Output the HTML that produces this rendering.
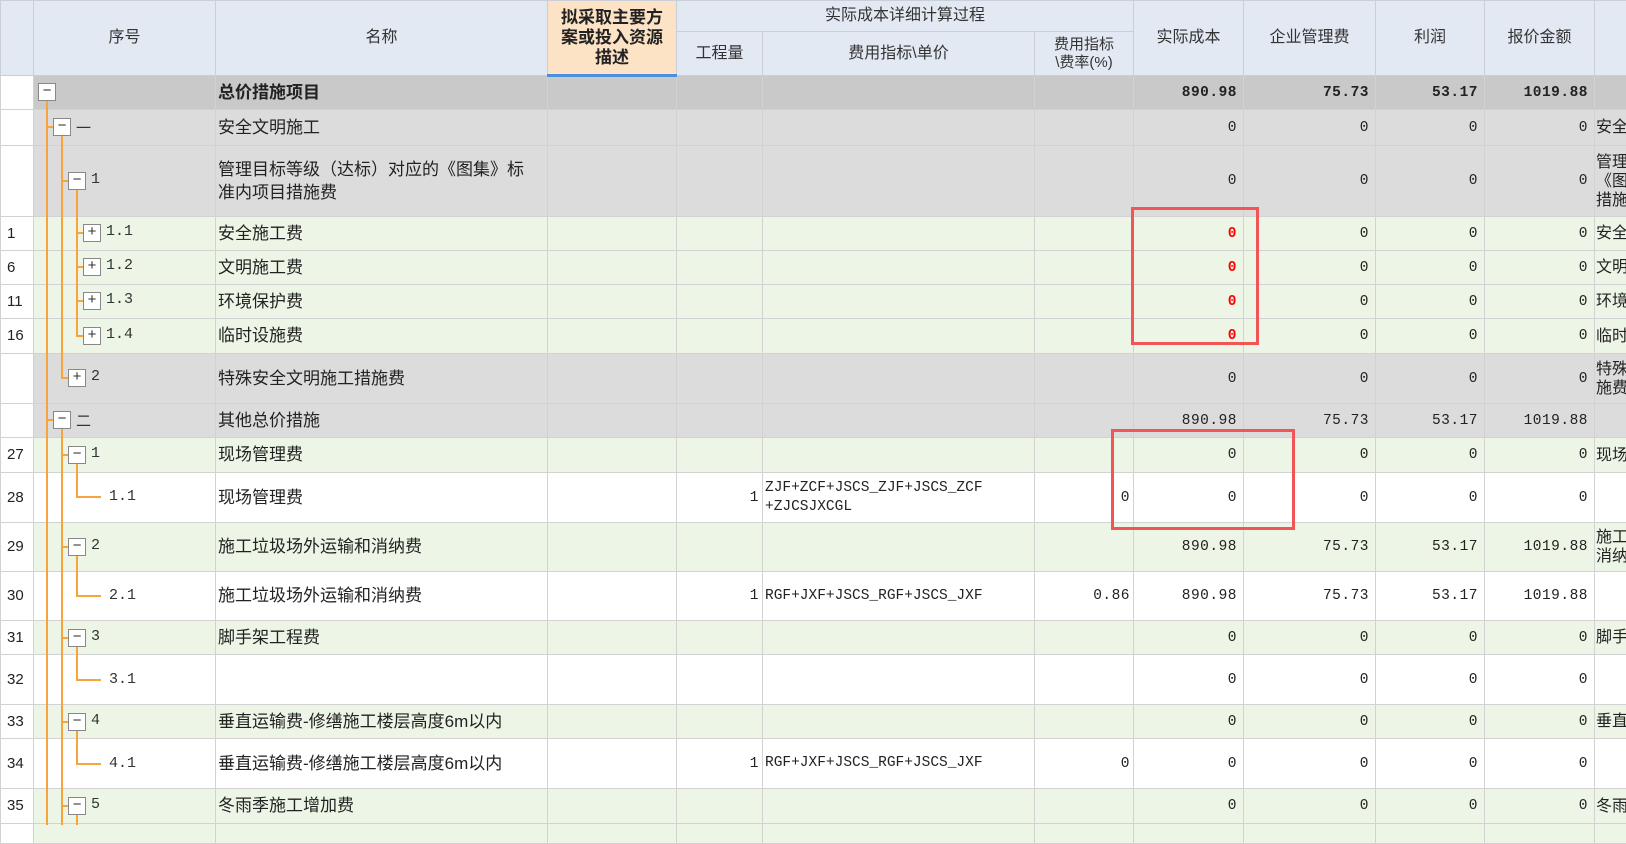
<!DOCTYPE html>
<html><head><meta charset="utf-8"><style>
*{margin:0;padding:0;box-sizing:border-box}
body{width:1626px;height:825px;overflow:hidden;background:#fff;font-family:"Liberation Sans","Noto Sans CJK SC",sans-serif;font-size:16px;color:#222;position:relative}
table{border-collapse:collapse;table-layout:fixed;position:absolute;left:0;top:0;width:1626px}
td,th{border:1px solid #d2d2d2;overflow:hidden;white-space:nowrap;font-weight:normal;vertical-align:middle;line-height:18px}
th{background:#e3e9f3;border-color:#c9ced8;font-size:16px;color:#333}
th.nq{background:#fde3c5;font-weight:bold;line-height:20px;border-bottom:3px solid #4a8fe0;font-size:17px;color:#222}
th.sm{font-size:15px;line-height:18px}
td.rn{background:#fff;font-family:"Liberation Sans",sans-serif;font-size:15px;padding-left:6px}
td.nm{padding-left:2px;font-size:17px}
td.n{text-align:right;padding-right:6px;font-family:"Liberation Mono",monospace;font-size:14.5px;letter-spacing:0.5px}
td.f{font-family:"Liberation Mono",monospace;font-size:14.5px;padding-left:2px;line-height:19px}
td.ex{padding-left:1px;font-size:16px;line-height:19px;text-overflow:clip}
tr.t td{background:#c9c9c9;font-weight:bold}
tr.g td{background:#dcdcdc}
tr.e td{background:#edf6e6}
tr.w td{background:#fff}
tr td.rn{background:#fff!important;font-weight:normal!important}
.red{color:#f00;font-weight:bold}
.vl{position:absolute;width:2px;background:#f7a43c}
.hl{position:absolute;height:2px;background:#f7a43c}
.bx{position:absolute;width:18px;height:18px;border:1px solid #888;background:#fff;font-size:15px;line-height:15px;text-align:center;color:#333;font-family:"Liberation Mono",monospace}
.sq{position:absolute;font-family:"Liberation Mono",monospace;font-size:15px;color:#333}
.rb{position:absolute;border:3px solid #f25555}
</style></head><body>
<table>
<colgroup><col style="width:33px"><col style="width:182px"><col style="width:332px"><col style="width:129px"><col style="width:86px"><col style="width:272px"><col style="width:99px"><col style="width:110px"><col style="width:132px"><col style="width:109px"><col style="width:110px"><col style="width:32px"></colgroup>
<tr style="height:31px"><th rowspan="2"></th><th rowspan="2">序号</th><th rowspan="2">名称</th><th rowspan="2" class="nq">拟采取主要方<br>案或投入资源<br>描述</th><th colspan="3">实际成本详细计算过程</th><th rowspan="2">实际成本</th><th rowspan="2">企业管理费</th><th rowspan="2">利润</th><th rowspan="2">报价金额</th><th rowspan="2"></th></tr>
<tr style="height:44px"><th>工程量</th><th>费用指标\单价</th><th class="sm">费用指标<br>\费率(%)</th></tr>
<tr class="t" style="height:34px"><td class="rn"></td><td></td><td class="nm">总价措施项目</td><td></td><td></td><td></td><td></td><td class="n">890.98</td><td class="n">75.73</td><td class="n">53.17</td><td class="n">1019.88</td><td></td></tr>
<tr class="g" style="height:36px"><td class="rn"></td><td></td><td class="nm">安全文明施工</td><td></td><td></td><td></td><td></td><td class="n">0</td><td class="n">0</td><td class="n">0</td><td class="n">0</td><td class="ex">安全</td></tr>
<tr class="g" style="height:71px"><td class="rn"></td><td></td><td class="nm" style="line-height:23px">管理目标等级（达标）对应的《图集》标<br>准内项目措施费</td><td></td><td></td><td></td><td></td><td class="n">0</td><td class="n">0</td><td class="n">0</td><td class="n">0</td><td class="ex">管理<br>《图<br>措施</td></tr>
<tr class="e" style="height:34px"><td class="rn">1</td><td></td><td class="nm">安全施工费</td><td></td><td></td><td></td><td></td><td class="n"><span class="red">0</span></td><td class="n">0</td><td class="n">0</td><td class="n">0</td><td class="ex">安全</td></tr>
<tr class="e" style="height:34px"><td class="rn">6</td><td></td><td class="nm">文明施工费</td><td></td><td></td><td></td><td></td><td class="n"><span class="red">0</span></td><td class="n">0</td><td class="n">0</td><td class="n">0</td><td class="ex">文明</td></tr>
<tr class="e" style="height:34px"><td class="rn">11</td><td></td><td class="nm">环境保护费</td><td></td><td></td><td></td><td></td><td class="n"><span class="red">0</span></td><td class="n">0</td><td class="n">0</td><td class="n">0</td><td class="ex">环境</td></tr>
<tr class="e" style="height:35px"><td class="rn">16</td><td></td><td class="nm">临时设施费</td><td></td><td></td><td></td><td></td><td class="n"><span class="red">0</span></td><td class="n">0</td><td class="n">0</td><td class="n">0</td><td class="ex">临时</td></tr>
<tr class="g" style="height:50px"><td class="rn"></td><td></td><td class="nm">特殊安全文明施工措施费</td><td></td><td></td><td></td><td></td><td class="n">0</td><td class="n">0</td><td class="n">0</td><td class="n">0</td><td class="ex">特殊<br>施费</td></tr>
<tr class="g" style="height:34px"><td class="rn"></td><td></td><td class="nm">其他总价措施</td><td></td><td></td><td></td><td></td><td class="n">890.98</td><td class="n">75.73</td><td class="n">53.17</td><td class="n">1019.88</td><td></td></tr>
<tr class="e" style="height:35px"><td class="rn">27</td><td></td><td class="nm">现场管理费</td><td></td><td></td><td></td><td></td><td class="n">0</td><td class="n">0</td><td class="n">0</td><td class="n">0</td><td class="ex">现场</td></tr>
<tr class="w" style="height:50px"><td class="rn">28</td><td></td><td class="nm">现场管理费</td><td></td><td class="n" style="padding-right:3px">1</td><td class="f">ZJF+ZCF+JSCS_ZJF+JSCS_ZCF<br>+ZJCSJXCGL</td><td class="n" style="padding-right:3px">0</td><td class="n">0</td><td class="n">0</td><td class="n">0</td><td class="n">0</td><td></td></tr>
<tr class="e" style="height:49px"><td class="rn">29</td><td></td><td class="nm">施工垃圾场外运输和消纳费</td><td></td><td></td><td></td><td></td><td class="n">890.98</td><td class="n">75.73</td><td class="n">53.17</td><td class="n">1019.88</td><td class="ex">施工<br>消纳</td></tr>
<tr class="w" style="height:49px"><td class="rn">30</td><td></td><td class="nm">施工垃圾场外运输和消纳费</td><td></td><td class="n" style="padding-right:3px">1</td><td class="f">RGF+JXF+JSCS_RGF+JSCS_JXF</td><td class="n" style="padding-right:3px">0.86</td><td class="n">890.98</td><td class="n">75.73</td><td class="n">53.17</td><td class="n">1019.88</td><td></td></tr>
<tr class="e" style="height:34px"><td class="rn">31</td><td></td><td class="nm">脚手架工程费</td><td></td><td></td><td></td><td></td><td class="n">0</td><td class="n">0</td><td class="n">0</td><td class="n">0</td><td class="ex">脚手</td></tr>
<tr class="w" style="height:50px"><td class="rn">32</td><td></td><td class="nm"></td><td></td><td></td><td></td><td></td><td class="n">0</td><td class="n">0</td><td class="n">0</td><td class="n">0</td><td></td></tr>
<tr class="e" style="height:34px"><td class="rn">33</td><td></td><td class="nm">垂直运输费-修缮施工楼层高度6m以内</td><td></td><td></td><td></td><td></td><td class="n">0</td><td class="n">0</td><td class="n">0</td><td class="n">0</td><td class="ex">垂直</td></tr>
<tr class="w" style="height:50px"><td class="rn">34</td><td></td><td class="nm">垂直运输费-修缮施工楼层高度6m以内</td><td></td><td class="n" style="padding-right:3px">1</td><td class="f">RGF+JXF+JSCS_RGF+JSCS_JXF</td><td class="n" style="padding-right:3px">0</td><td class="n">0</td><td class="n">0</td><td class="n">0</td><td class="n">0</td><td></td></tr>
<tr class="e" style="height:35px"><td class="rn">35</td><td></td><td class="nm">冬雨季施工增加费</td><td></td><td></td><td></td><td></td><td class="n">0</td><td class="n">0</td><td class="n">0</td><td class="n">0</td><td class="ex">冬雨</td></tr>
<tr class="e" style="height:20px"><td class="rn"></td><td></td><td></td><td></td><td></td><td></td><td></td><td></td><td></td><td></td><td></td><td></td></tr>
</table>

<div class="vl" style="left:46px;top:92px;height:733px"></div>
<div class="hl" style="left:46px;top:126px;width:8px"></div>
<div class="vl" style="left:61px;top:128px;height:250px"></div>
<div class="hl" style="left:61px;top:180px;width:8px"></div>
<div class="vl" style="left:76px;top:182px;height:154px"></div>
<div class="hl" style="left:76px;top:232px;width:8px"></div>
<div class="hl" style="left:76px;top:266px;width:8px"></div>
<div class="hl" style="left:76px;top:300px;width:8px"></div>
<div class="hl" style="left:76px;top:335px;width:8px"></div>
<div class="hl" style="left:61px;top:377px;width:8px"></div>
<div class="hl" style="left:46px;top:419px;width:8px"></div>
<div class="vl" style="left:61px;top:428px;height:397px"></div>
<div class="hl" style="left:61px;top:454px;width:8px"></div>
<div class="hl" style="left:61px;top:546px;width:8px"></div>
<div class="hl" style="left:61px;top:637px;width:8px"></div>
<div class="hl" style="left:61px;top:721px;width:8px"></div>
<div class="hl" style="left:61px;top:805px;width:8px"></div>
<div class="vl" style="left:76px;top:463px;height:34px"></div><div class="hl" style="left:76px;top:496px;width:25px"></div>
<div class="vl" style="left:76px;top:555px;height:41px"></div><div class="hl" style="left:76px;top:595px;width:25px"></div>
<div class="vl" style="left:76px;top:646px;height:34px"></div><div class="hl" style="left:76px;top:679px;width:25px"></div>
<div class="vl" style="left:76px;top:730px;height:34px"></div><div class="hl" style="left:76px;top:763px;width:25px"></div>
<div class="vl" style="left:76px;top:814px;height:11px"></div>

<div class="bx" style="left:38px;top:83px">−</div>
<div class="bx" style="left:53px;top:118px">−</div><span class="sq" style="left:76px;top:117px">一</span>
<div class="bx" style="left:68px;top:172px">−</div><span class="sq" style="left:91px;top:171px">1</span>
<div class="bx" style="left:83px;top:224px">+</div><span class="sq" style="left:106px;top:223px">1.1</span>
<div class="bx" style="left:83px;top:258px">+</div><span class="sq" style="left:106px;top:257px">1.2</span>
<div class="bx" style="left:83px;top:292px">+</div><span class="sq" style="left:106px;top:291px">1.3</span>
<div class="bx" style="left:83px;top:327px">+</div><span class="sq" style="left:106px;top:326px">1.4</span>
<div class="bx" style="left:68px;top:369px">+</div><span class="sq" style="left:91px;top:368px">2</span>
<div class="bx" style="left:53px;top:411px">−</div><span class="sq" style="left:76px;top:410px">二</span>
<div class="bx" style="left:68px;top:446px">−</div><span class="sq" style="left:91px;top:445px">1</span>
<span class="sq" style="left:109px;top:488px">1.1</span>
<div class="bx" style="left:68px;top:538px">−</div><span class="sq" style="left:91px;top:537px">2</span>
<span class="sq" style="left:109px;top:587px">2.1</span>
<div class="bx" style="left:68px;top:629px">−</div><span class="sq" style="left:91px;top:628px">3</span>
<span class="sq" style="left:109px;top:671px">3.1</span>
<div class="bx" style="left:68px;top:713px">−</div><span class="sq" style="left:91px;top:712px">4</span>
<span class="sq" style="left:109px;top:755px">4.1</span>
<div class="bx" style="left:68px;top:797px">−</div><span class="sq" style="left:91px;top:796px">5</span>

<div class="rb" style="left:1131px;top:207px;width:128px;height:138px"></div>
<div class="rb" style="left:1111px;top:429px;width:184px;height:101px"></div>
</body></html>
